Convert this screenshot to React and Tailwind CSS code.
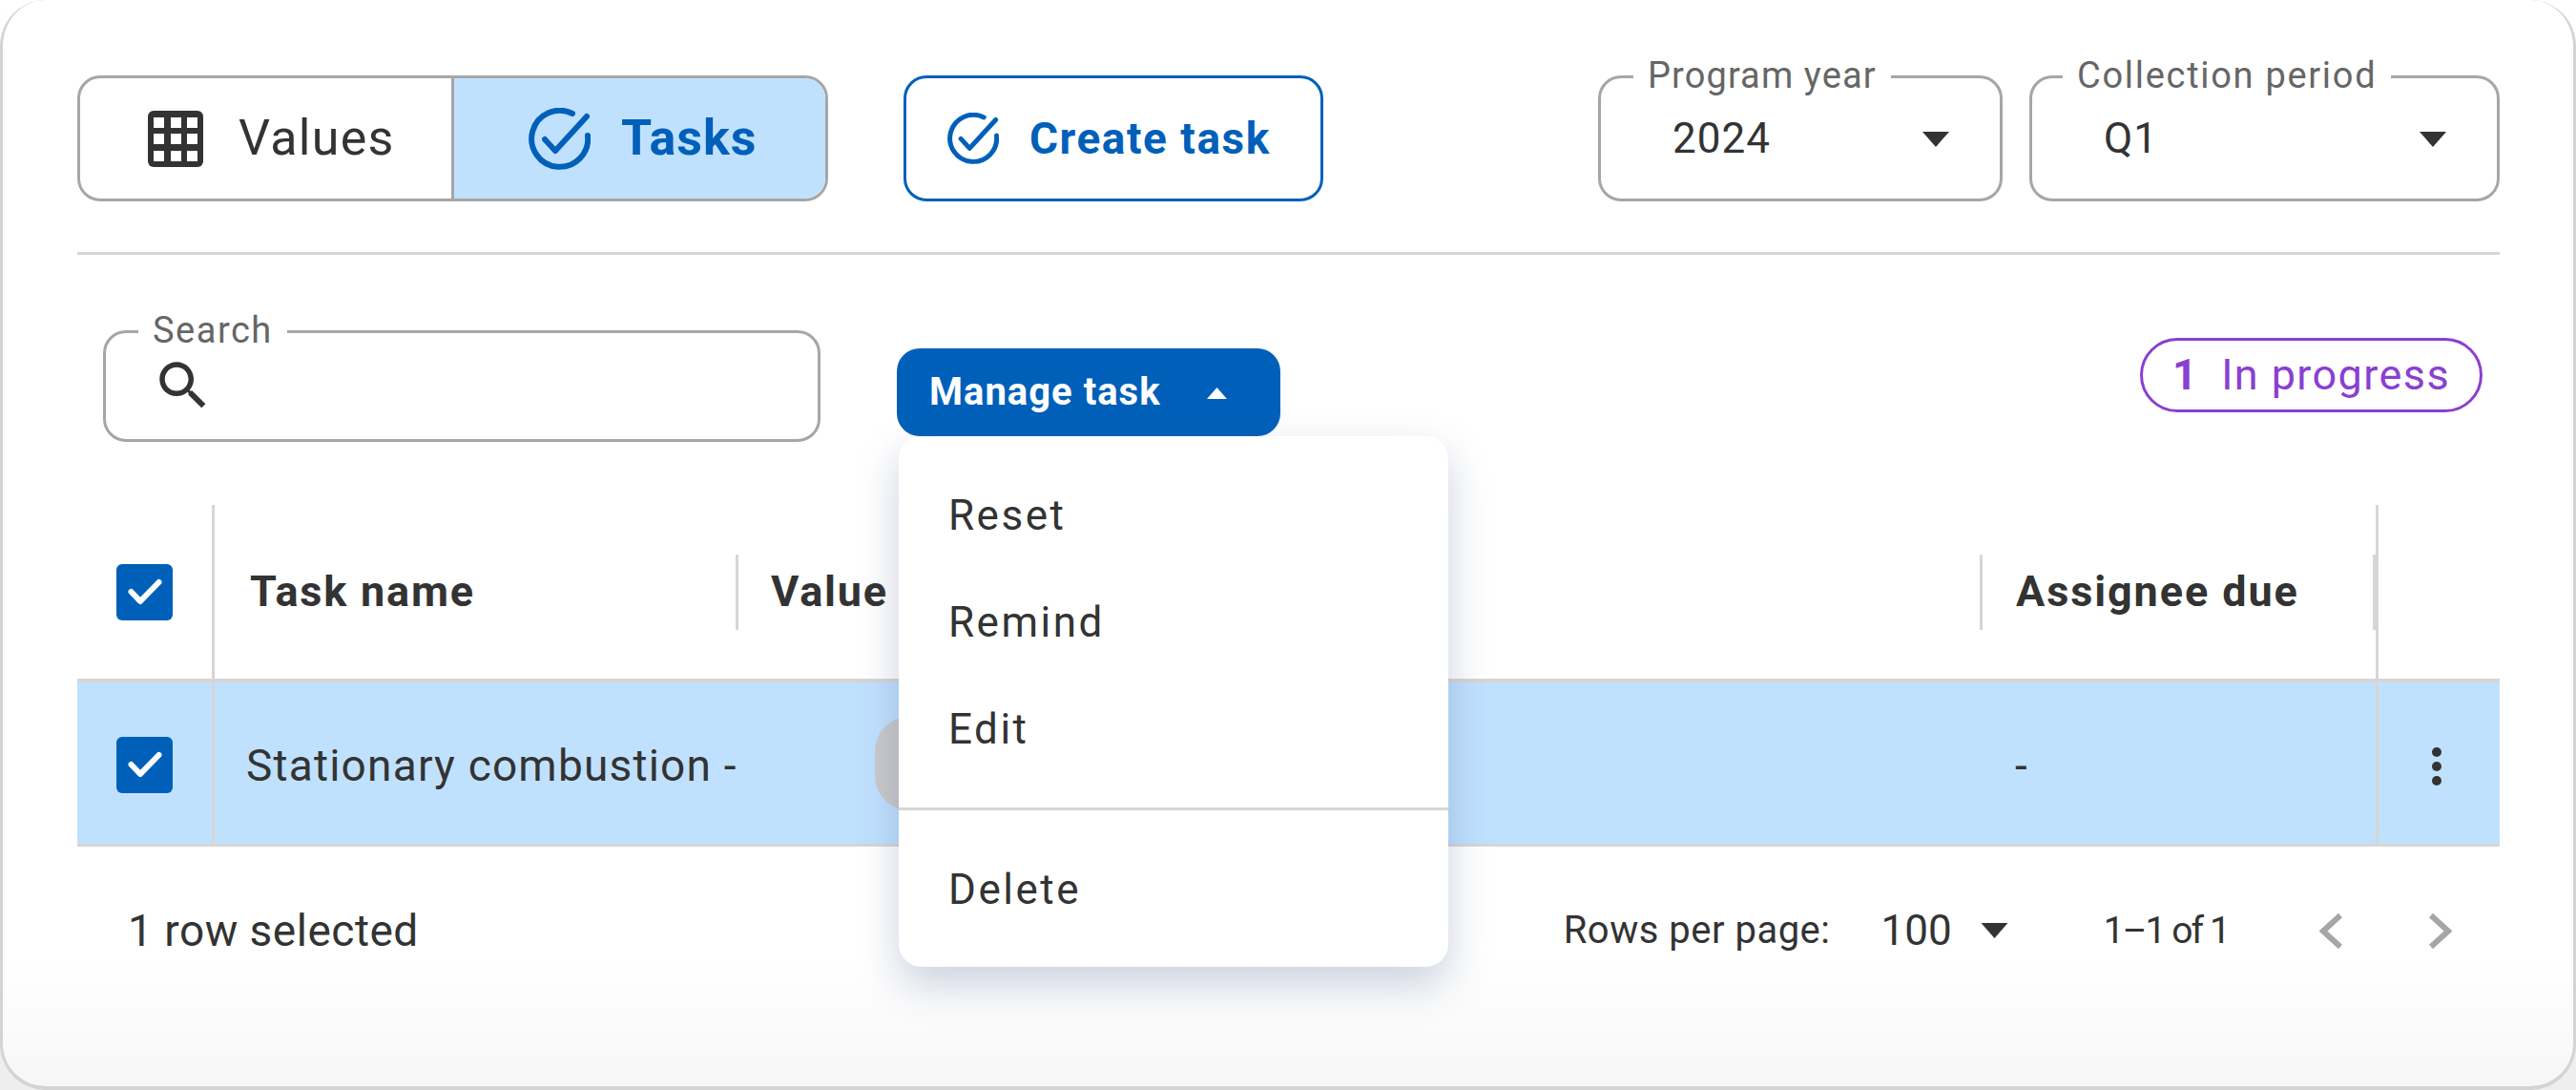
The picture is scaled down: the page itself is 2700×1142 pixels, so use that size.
import React from 'react';

const CheckCircle = ({ className }) => (
  <svg viewBox="0 0 65 65" fill="none" stroke="currentColor" strokeWidth="6" strokeLinecap="round" strokeLinejoin="round" className={className}>
    <path d="M46 6 A29.5 29.5 0 1 0 62 29" />
    <path d="M17 33 L28 45 L61 9" />
  </svg>
);

const TableIcon = () => (
  <svg viewBox="0 0 58 59" className="w-[58px] h-[59px]">
    <rect width="58" height="59" rx="6" fill="#333" />
    {[6, 24, 41].map(x => [7, 24, 42].map(y => (
      <rect key={`${x}-${y}`} x={x} y={y} width="11" height="11" fill="#fff" />
    )))}
  </svg>
);

const Caret = ({ className, up }) => (
  <svg viewBox="0 0 28 16" className={className} fill="currentColor">
    <path d={up ? 'M14 0 L28 16 L0 16 Z' : 'M0 0 L28 0 L14 16 Z'} />
  </svg>
);

const Checkbox = () => (
  <div className="w-[59px] h-[59px] rounded-[6px] bg-[#0060b9] flex items-center justify-center">
    <svg viewBox="0 0 36 28" fill="none" stroke="#fff" strokeWidth="6" strokeLinecap="round" strokeLinejoin="round" className="w-[36px] h-[28px]">
      <path d="M3.5 14 L13 24 L32.5 4" />
    </svg>
  </div>
);

const OutlinedField = ({ label, value, className, notch }) => (
  <div className={`relative h-[132px] rounded-[24px] border-[3px] border-[#a6a6a6] flex items-center ${className}`}>
    <span className={`absolute -top-[25px] bg-white px-[15px] text-[38px] leading-[44px] text-[#666] ${notch}`}>{label}</span>
    <span className="ml-[75px] text-[44px] leading-[52px] tracking-[1px] text-[#333]">{value}</span>
    <Caret className="absolute right-[53px] top-[56px] w-[28px] h-[16px] text-[#333]" />
  </div>
);

const HeadCell = ({ className, children }) => (
  <div className={`flex items-center text-[45px] font-bold text-[#333] ${className}`}>{children}</div>
);

const Divider = () => <div className="w-[3px] h-[79px] bg-[#d6d6d6]" />;

const menuItem = 'h-[112px] pl-[52px] flex items-center text-[44px] text-[#333] tracking-[2.5px]';

const App = () => {
  return (
    <div className="w-[2700px] h-[1142px] bg-gradient-to-b from-white to-[#eeeeee] font-['Roboto',sans-serif] overflow-hidden">
      <div className="h-full rounded-[48px] border-x-[3px] border-b-[4px] border-[#d4d4d4] bg-gradient-to-b from-white from-88% to-[#f7f7f7] pl-[78px] pr-[77px] pt-[79px]">
        {/* top bar */}
        <div className="flex items-center">
          <div className="flex h-[132px] w-[787px] rounded-[24px] border-[3px] border-[#a6a6a6] overflow-hidden">
            <div className="w-[392px] border-r-[3px] border-[#a6a6a6] flex items-center pl-[71px]">
              <TableIcon />
              <span className="ml-[37px] text-[52px] tracking-[1.3px] text-[#333]">Values</span>
            </div>
            <div className="flex-1 bg-[#c0e1fe] flex items-center pl-[78px] text-[#0060b9]">
              <CheckCircle className="w-[65px] h-[65px]" />
              <span className="ml-[32px] text-[52px] tracking-[1px] font-bold">Tasks</span>
            </div>
          </div>
          <div className="ml-[79px] w-[440px] h-[132px] rounded-[24px] border-[3px] border-[#0060b9] flex items-center pl-[43px] text-[#0060b9]">
            <CheckCircle className="w-[54px] h-[54px]" />
            <span className="ml-[32px] text-[46px] tracking-[1.5px] font-bold">Create task</span>
          </div>
          <div className="ml-auto flex gap-[28px]">
            <OutlinedField label="Program year" value="2024" className="w-[424px] tracking-[1.1px]" notch="left-[34px]" />
            <OutlinedField label="Collection period" value="Q1" className="w-[493px] tracking-[1.7px]" notch="left-[32px]" />
          </div>
        </div>

        <div className="mt-[53px] h-[3px] bg-[#d6d6d6]" />

        {/* search row */}
        <div className="mt-[79px] h-[183px] flex items-start pl-[27px]">
          <div className="relative w-[752px] h-[117px] rounded-[24px] border-[3px] border-[#a6a6a6]">
            <span className="absolute -top-[25px] left-[34px] bg-white px-[15px] text-[38px] leading-[44px] tracking-[1.5px] text-[#666]">Search</span>
            <svg viewBox="0 0 24 24" fill="#333" className="absolute left-[48px] top-[22px] w-[66px] h-[66px]">
              <path d="M15.5 14h-.79l-.28-.27C15.41 12.59 16 11.11 16 9.5 16 5.91 13.09 3 9.5 3S3 5.91 3 9.5 5.91 16 9.5 16c1.61 0 3.09-.59 4.23-1.57l.27.28v.79l5 4.99L20.49 19l-4.99-5zm-6 0C7.01 14 5 11.99 5 9.5S7.01 5 9.5 5 14 7.01 14 9.5 11.99 14 9.5 14z" />
            </svg>
          </div>
          <div className="relative ml-[80px] mt-[19px]">
            <div className="w-[402px] h-[92px] rounded-[24px] bg-[#0060b9] flex items-center pl-[34px] text-white">
              <span className="text-[40px] tracking-[1px] font-bold">Manage task</span>
              <Caret up className="absolute left-[324px] top-[41px] w-[23px] h-[12px]" />
            </div>
            <div className="absolute z-10 left-[2px] top-[92px] w-[576px] h-[556px] rounded-[24px] bg-white py-[27px] shadow-[0_18px_44px_rgba(70,90,140,0.28)]">
              <div className={menuItem}>Reset</div>
              <div className={menuItem}>Remind</div>
              <div className={menuItem}>Edit</div>
              <div className="mt-[26px] mb-[27px] h-[3px] bg-[#d6d6d6]" />
              <div className={menuItem}>Delete</div>
            </div>
          </div>
          <div className="ml-auto mr-[18px] mt-[8px] w-[359px] h-[78px] rounded-full border-[3px] border-[#8a3fd1] flex items-center pl-[31px] text-[45px] tracking-[1.4px] text-[#8a3fd1]">
            <span className="font-bold">1</span>
            <span className="ml-[24px]">In progress</span>
          </div>
        </div>

        {/* table */}
        <div className="flex h-[186px] border-b-[4px] border-[#d6d6d6]">
          <div className="w-[144px] border-r-[3px] border-[#d6d6d6] flex items-center pl-[41px]">
            <Checkbox />
          </div>
          <HeadCell className="w-[549px] pl-[37px] justify-between">
            <span className="tracking-[1.8px]">Task name</span>
            <Divider />
          </HeadCell>
          <HeadCell className="w-[1304px] pl-[34px] justify-between">
            <span className="tracking-[1.8px]">Value</span>
            <Divider />
          </HeadCell>
          <HeadCell className="w-[412px] pl-[35px] justify-between">
            <span className="tracking-[1.9px]">Assignee due</span>
            <Divider />
          </HeadCell>
          <div className="w-[3px] bg-[#d6d6d6]" />
        </div>
        <div className="flex h-[172px] bg-[#c0e1fe] border-b-[3px] border-[#d6d6d6] text-[46px] text-[#333]">
          <div className="w-[144px] border-r-[3px] border-[#d6d6d6] flex items-center pl-[41px] pt-[3px]">
            <Checkbox />
          </div>
          <div className="w-[549px] pl-[33px] pt-[6px] tracking-[1.2px] flex items-center whitespace-nowrap">Stationary combustion -</div>
          <div className="w-[1304px] pl-[143px] flex items-center">
            <div className="w-[400px] h-[98px] rounded-[36px] bg-[#cacaca]" />
          </div>
          <div className="w-[412px] pl-[34px] pt-[6px] flex items-center">-</div>
          <div className="w-[3px] bg-[#d6d6d6]" />
          <div className="flex-1 flex flex-col items-center justify-center gap-[5px] pr-[6px] pt-[6px]">
            <span className="w-[10px] h-[10px] rounded-full bg-[#333]" />
            <span className="w-[10px] h-[10px] rounded-full bg-[#333]" />
            <span className="w-[10px] h-[10px] rounded-full bg-[#333]" />
          </div>
        </div>

        {/* footer */}
        <div className="flex items-center h-[176px] pl-[53px] text-[#333]">
          <span className="text-[46px] tracking-[0.5px]">1 row selected</span>
          <div className="ml-auto flex items-center">
            <span className="text-[40px] tracking-[0.5px]">Rows per page:</span>
            <span className="ml-[53px] text-[44px]">100</span>
            <Caret className="ml-[30px] w-[29px] h-[16px]" />
            <span className="ml-[100px] text-[39px] tracking-[-1.9px]">1–1 of 1</span>
            <svg viewBox="0 0 25 37" fill="none" stroke="#a6a6a6" strokeWidth="6" className="ml-[95px] w-[25px] h-[37px]">
              <path d="M22 2 L4 18.5 L22 35" />
            </svg>
            <svg viewBox="0 0 25 37" fill="none" stroke="#a6a6a6" strokeWidth="6" className="ml-[89px] mr-[50px] w-[25px] h-[37px]">
              <path d="M3 2 L21 18.5 L3 35" />
            </svg>
          </div>
        </div>
      </div>
    </div>
  );
};

export default App;
